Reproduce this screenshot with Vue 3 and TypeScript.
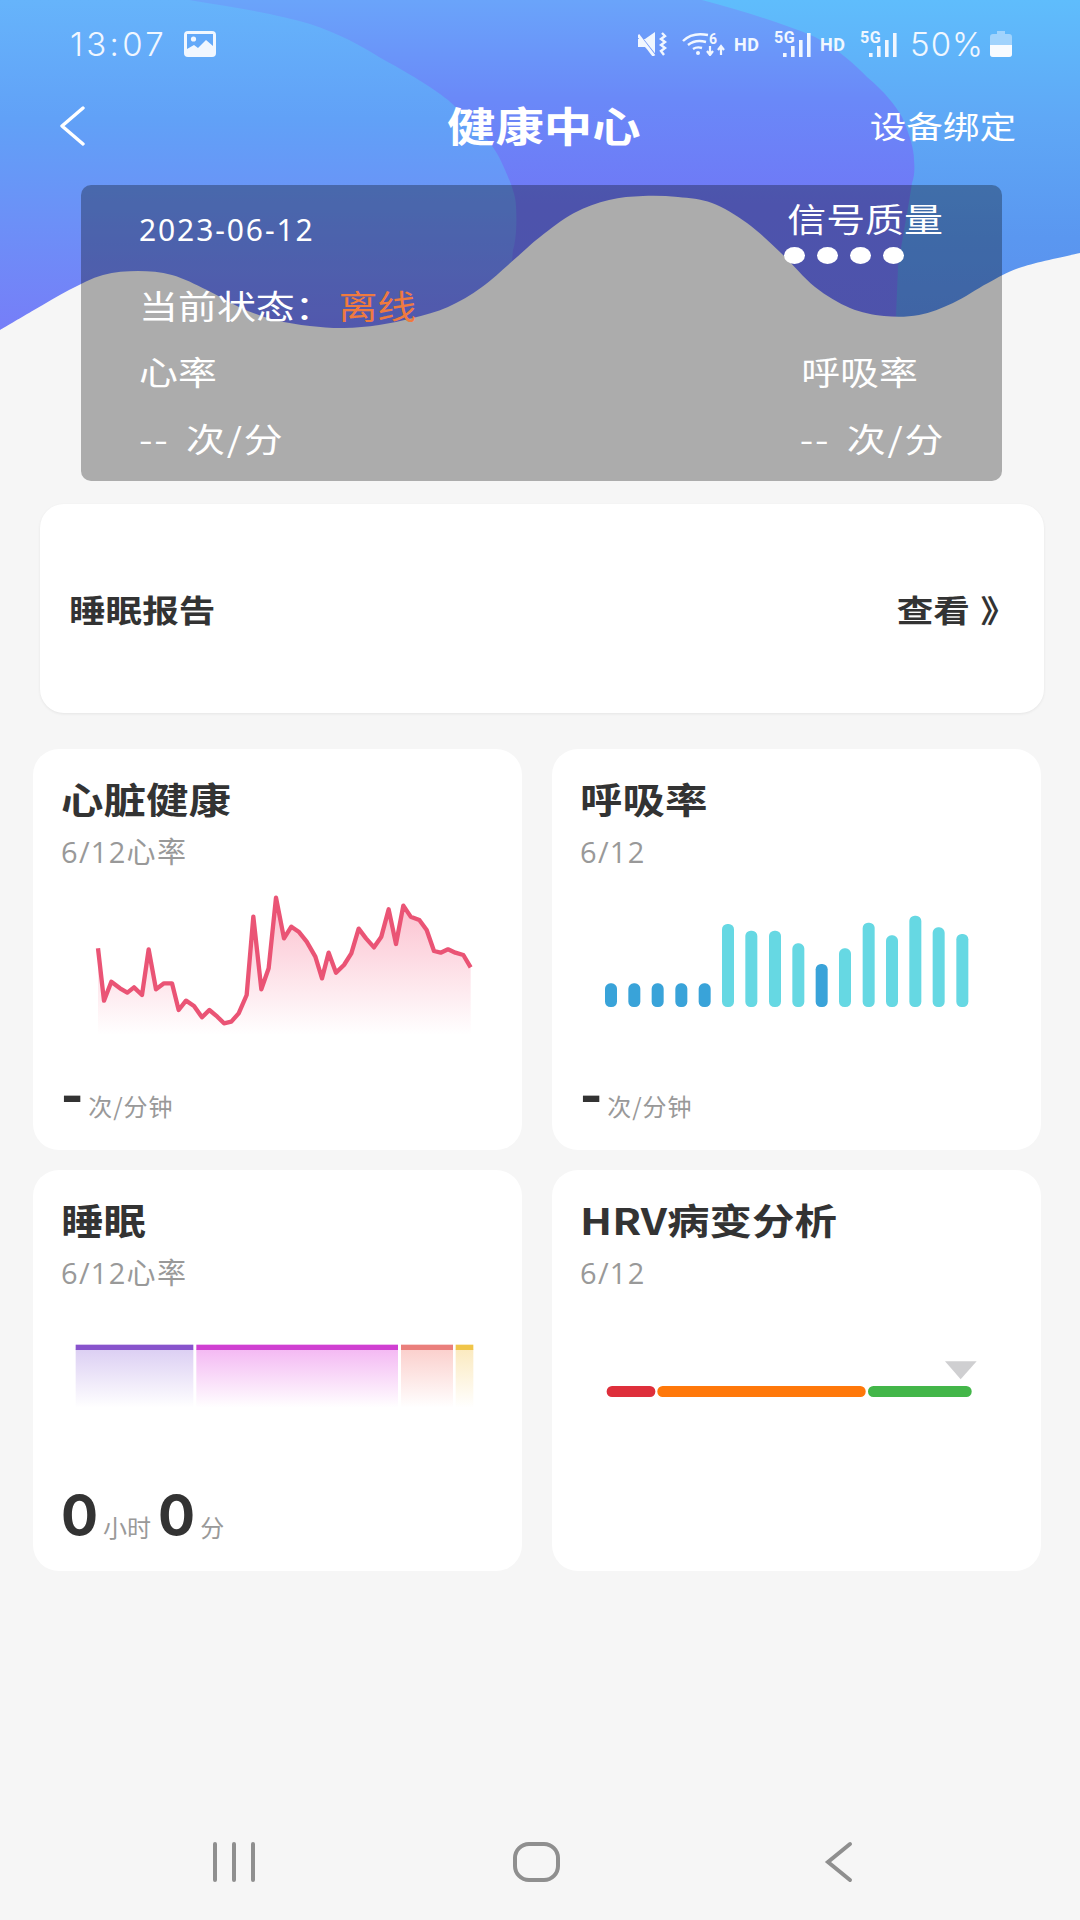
<template>
  <div class="page">
    <svg class="wave" viewBox="0 0 1080 340" width="1080" height="340">
      <defs>
        <linearGradient id="baseFill" x1="0" y1="0" x2="0" y2="1">
          <stop offset="0" stop-color="#6aa4fa" />
          <stop offset="0.3" stop-color="#6a88f8" />
          <stop offset="0.6" stop-color="#6f78f6" />
          <stop offset="1" stop-color="#7076f5" />
        </linearGradient>
        <linearGradient id="leftFill" x1="0" y1="0" x2="0" y2="1">
          <stop offset="0" stop-color="#66b4fb" />
          <stop offset="0.35" stop-color="#61a1f7" />
          <stop offset="0.65" stop-color="#6c90f7" />
          <stop offset="1" stop-color="#777cf8" />
        </linearGradient>
        <linearGradient id="rightFill" x1="0" y1="0" x2="0" y2="1">
          <stop offset="0" stop-color="#5fbdfc" />
          <stop offset="0.35" stop-color="#5fa8f6" />
          <stop offset="0.7" stop-color="#5a97f0" />
          <stop offset="1" stop-color="#5c8eec" />
        </linearGradient>
      </defs>
      <rect width="1080" height="340" fill="url(#baseFill)" />
      <path d="M0 0H189C240 8 280 15 310 24C340 34 360 45 379 57C410 74 430 86 448 100C475 125 490 140 499 157C510 180 516 195 516 207C517 225 516 240 513 250L505 340H0Z" fill="url(#leftFill)" />
      <path d="M702 0C745 12 780 22 815 37C840 50 855 65 867 77C885 92 895 105 902 117C910 135 914 150 914 160C915 170 914 178 912 183C908 210 902 240 898 267L895 340H1080V0Z" fill="url(#rightFill)" />
      <path :d="wavePath" fill="#f6f6f6" />
    </svg>

    <div class="status-bar">
      <div class="status-left">
        <span class="clock">13:07</span>
        <svg viewBox="0 0 32 26" width="32" height="26">
          <rect width="32" height="26" rx="4" fill="#f1f7ff" />
          <path d="M3 3H29V15L22 9 14 17 10 14 3 18Z" fill="#63a9f9" />
          <circle cx="9.5" cy="8" r="2.6" fill="#f1f7ff" />
        </svg>
      </div>
      <div class="status-right">
        <svg viewBox="0 0 30 24" width="30" height="24">
          <path d="M0 7H7L17 0V22L7 15H0Z" fill="#f1f7ff" />
          <path d="M-1 0L18 24" stroke="#6f96f8" stroke-width="2" />
          <path d="M0 3L16 24" stroke="#f1f7ff" stroke-width="3" />
          <path d="M24 1L27 4 23 7 27 10 23 13 27 16 23 19 26 23" stroke="#f1f7ff" stroke-width="2.4" fill="none" />
        </svg>
        <svg class="wifi" viewBox="0 0 44 24" width="44" height="24">
          <g fill="none" stroke="#f1f7ff" stroke-width="2.4">
            <path d="M1 9C7 3 16 1 26 3" />
            <path d="M6 13C11 9 17 8 24 10" />
            <path d="M11 17C14 15 17 15 20 16" />
          </g>
          <circle cx="16" cy="21" r="2" fill="#f1f7ff" />
          <text x="27" y="12" class="wifi-six">6</text>
          <path d="M28 14V22M25 19 28 23 31 19M39 23V15M36 18 39 14 42 18" stroke="#f1f7ff" stroke-width="2.2" fill="none" />
        </svg>
        <span class="hd first-hd">HD</span>
        <div class="signal">
          <span class="five-g">5G</span>
          <svg viewBox="0 0 28 24" width="28" height="24">
            <g fill="#f1f7ff">
              <rect x="0" y="20" width="3.6" height="4" />
              <rect x="8" y="13" width="3.6" height="11" />
              <rect x="16" y="7" width="3.6" height="17" />
              <rect x="24" y="0" width="3.6" height="24" />
            </g>
          </svg>
        </div>
        <span class="hd">HD</span>
        <div class="signal">
          <span class="five-g">5G</span>
          <svg viewBox="0 0 28 24" width="28" height="24">
            <g fill="#f1f7ff">
              <rect x="0" y="20" width="3.6" height="4" />
              <rect x="8" y="13" width="3.6" height="11" />
              <rect x="16" y="7" width="3.6" height="17" />
              <rect x="24" y="0" width="3.6" height="24" />
            </g>
          </svg>
        </div>
        <span class="percent">50%</span>
        <svg class="battery" viewBox="0 0 22 26" width="22" height="26">
          <path d="M7 0H15V3H19A3 3 0 0 1 22 6V23A3 3 0 0 1 19 26H3A3 3 0 0 1 0 23V6A3 3 0 0 1 3 3H7Z" fill="#f1f7ff" fill-opacity="0.45" />
          <path d="M0 14H22V23A3 3 0 0 1 19 26H3A3 3 0 0 1 0 23Z" fill="#f8fbff" />
        </svg>
      </div>
    </div>

    <div class="nav">
      <svg class="back" viewBox="0 0 26 40" width="26" height="40">
        <path d="M24 2L3 20L24 38" fill="none" stroke="#fff" stroke-width="3.4" stroke-linecap="round" stroke-linejoin="round" />
      </svg>
      <span class="nav-title wide">健康中心</span>
      <span class="nav-action wide-end">设备绑定</span>
    </div>

    <section class="monitor">
      <div class="monitor-top">
        <div>
          <div class="monitor-date">2023-06-12</div>
          <div class="monitor-state wide">当前状态：<span class="offline">离线</span></div>
        </div>
        <div class="quality">
          <div class="wide-end">信号质量</div>
          <div class="dots">
            <i v-for="n in 4" :key="n" />
          </div>
        </div>
      </div>
      <div class="monitor-row">
        <span class="wide">心率</span>
        <span class="wide-end resp-label">呼吸率</span>
      </div>
      <div class="monitor-row values">
        <span class="wide">-- 次/分</span>
        <span class="wide-end">-- 次/分</span>
      </div>
    </section>

    <section class="report">
      <span class="wide">睡眠报告</span>
      <span class="wide-end report-link">查看 》</span>
    </section>

    <div class="cards">
      <article class="card">
        <h3>心脏健康</h3>
        <p class="sub">6/12心率</p>
        <svg class="chart" viewBox="93 390 1293 570" width="431" height="190">
          <defs>
            <linearGradient id="heartFill" gradientUnits="userSpaceOnUse" x1="0" y1="450" x2="0" y2="855">
              <stop offset="0" stop-color="#f7678a" stop-opacity="0.42" />
              <stop offset="1" stop-color="#f7678a" stop-opacity="0" />
            </linearGradient>
          </defs>
          <polygon :points="heartArea" fill="url(#heartFill)" />
          <polyline :points="heartLine" fill="none" stroke="#ea5475" stroke-width="13" stroke-linejoin="round" />
        </svg>
        <div class="foot"><b class="dash">-</b><span class="unit">次/分钟</span></div>
      </article>

      <article class="card">
        <h3>呼吸率</h3>
        <p class="sub">6/12</p>
        <svg class="chart" viewBox="90 390 1293 570" width="431" height="190">
          <rect
            v-for="bar in breathBars"
            :key="bar.x"
            :x="bar.x - 18"
            :y="bar.top"
            width="36"
            :height="771 - bar.top"
            rx="16"
            :fill="bar.dark ? '#39a3d9' : '#66d8e3'"
          />
        </svg>
        <div class="foot"><b class="dash">-</b><span class="unit">次/分钟</span></div>
      </article>

      <article class="card">
        <h3>睡眠</h3>
        <p class="sub">6/12心率</p>
        <svg class="chart" viewBox="93 393 1293 570" width="431" height="190">
          <defs>
            <linearGradient v-for="seg in sleepSegs" :id="seg.id" :key="seg.id" x1="0" y1="0" x2="0" y2="1">
              <stop offset="0" :stop-color="seg.fade" />
              <stop offset="1" :stop-color="seg.fade" stop-opacity="0" />
            </linearGradient>
          </defs>
          <g v-for="seg in sleepSegs" :key="seg.id">
            <rect :x="seg.x" y="538" :width="seg.w" height="175" :fill="`url(#${seg.id})`" />
            <rect :x="seg.x" y="524" :width="seg.w" height="16" :fill="seg.color" />
          </g>
        </svg>
        <div class="foot sleep-foot">
          <b class="big">0</b><span class="unit">小时</span><b class="big">0</b><span class="unit">分</span>
        </div>
      </article>

      <article class="card">
        <h3>HRV病变分析</h3>
        <p class="sub">6/12</p>
        <svg class="chart" viewBox="90 393 1293 570" width="431" height="190">
          <rect x="170" y="648" width="146" height="33" rx="16" fill="#de2f3b" />
          <rect x="322" y="648" width="625" height="33" rx="16" fill="#ff780a" />
          <rect x="954" y="648" width="311" height="33" rx="16" fill="#43b649" />
          <polygon points="1185,574 1280,574 1232,628" fill="#cfcfd1" />
        </svg>
      </article>
    </div>

    <div class="sys-nav">
      <svg viewBox="0 0 44 42" width="44" height="42">
        <g stroke="#8f8f8f" stroke-width="4" stroke-linecap="round">
          <path d="M3 3V39M22 3V39M41 3V39" />
        </g>
      </svg>
      <svg class="home" viewBox="0 0 50 42" width="50" height="42">
        <rect x="4" y="3" width="43" height="36" rx="14" fill="none" stroke="#8f8f8f" stroke-width="4" />
      </svg>
      <svg class="back-key" viewBox="0 0 30 42" width="30" height="42">
        <path d="M27 3L5 21L27 39" fill="none" stroke="#8f8f8f" stroke-width="4" stroke-linecap="round" stroke-linejoin="miter" />
      </svg>
    </div>
  </div>
</template>

<script setup lang="ts">
const wavePoints: [number, number][] = [
  [0, 330], [34, 310], [69, 290], [103, 275], [138, 271], [172, 275], [207, 290], [241, 308],
  [275, 320], [310, 326], [344, 328], [379, 325], [413, 318], [448, 307], [482, 287], [517, 257],
  [540, 237], [574, 213], [609, 200], [643, 196], [678, 197], [712, 203], [747, 223], [781, 253],
  [815, 287], [850, 308], [884, 316], [919, 315], [953, 303], [988, 283], [1022, 267], [1080, 253],
]

// smooth line through the sampled edge of the white area
function smoothPath(pts: [number, number][]) {
  let d = `M${pts[0][0]} ${pts[0][1]}`
  for (let i = 0; i < pts.length - 1; i++) {
    const p0 = pts[Math.max(i - 1, 0)]
    const p1 = pts[i]
    const p2 = pts[i + 1]
    const p3 = pts[Math.min(i + 2, pts.length - 1)]
    const c1x = p1[0] + (p2[0] - p0[0]) / 6
    const c1y = p1[1] + (p2[1] - p0[1]) / 6
    const c2x = p2[0] - (p3[0] - p1[0]) / 6
    const c2y = p2[1] - (p3[1] - p1[1]) / 6
    d += `C${c1x} ${c1y} ${c2x} ${c2y} ${p2[0]} ${p2[1]}`
  }
  return d
}

const wavePath = `${smoothPath(wavePoints)}V340H0Z`

const heartPoints: [number, number][] = [
  [204, 595], [222, 752], [244, 695], [270, 715], [292, 728], [312, 712], [336, 735], [356, 598],
  [378, 718], [402, 700], [426, 700], [446, 780], [468, 752], [492, 768], [516, 802], [538, 780],
  [562, 800], [582, 820], [604, 815], [626, 790], [650, 735], [670, 500], [694, 718], [716, 655],
  [738, 443], [762, 565], [784, 530], [806, 545], [830, 575], [856, 620], [876, 685], [896, 608],
  [918, 668], [942, 645], [964, 610], [986, 536], [1008, 565], [1032, 592], [1054, 560], [1076, 478],
  [1098, 582], [1120, 467], [1142, 500], [1168, 510], [1190, 540], [1212, 603], [1232, 608],
  [1254, 598], [1276, 608], [1300, 615], [1322, 652],
]

const heartLine = heartPoints.map((p) => p.join(',')).join(' ')
const heartArea = `204,855 ${heartLine} 1322,855`

const breathBars = [
  { x: 183, top: 700, dark: true },
  { x: 253, top: 700, dark: true },
  { x: 323, top: 700, dark: true },
  { x: 394, top: 700, dark: true },
  { x: 464, top: 700, dark: true },
  { x: 534, top: 522 },
  { x: 604, top: 542 },
  { x: 675, top: 542 },
  { x: 745, top: 580 },
  { x: 815, top: 642, dark: true },
  { x: 885, top: 595 },
  { x: 956, top: 518 },
  { x: 1026, top: 556 },
  { x: 1096, top: 497 },
  { x: 1166, top: 532 },
  { x: 1237, top: 552 },
]

const sleepSegs = [
  { id: 'sleepDeep', x: 137, w: 353, color: '#8853cc', fade: '#dccff3' },
  { id: 'sleepLight', x: 499, w: 605, color: '#d03fd2', fade: '#f4b9f3' },
  { id: 'sleepRem', x: 1113, w: 156, color: '#ea7f7c', fade: '#fbd0cd' },
  { id: 'sleepAwake', x: 1277, w: 53, color: '#f0c549', fade: '#fbeac0' },
]
</script>

<style>
html,
body {
  margin: 0;
  background: #f6f6f6;
}
</style>

<style scoped>
.page {
  position: relative;
  width: 1080px;
  height: 1920px;
  display: flex;
  flex-direction: column;
  overflow: hidden;
  background: #f6f6f6;
  font-family: "Noto Sans CJK SC", "Liberation Sans", sans-serif;
  color: #333;
}

.wave {
  position: absolute;
  top: 0;
  left: 0;
}

.status-bar,
.nav,
.monitor,
.report,
.cards,
.sys-nav {
  position: relative;
}

/* the source capture is stretched sideways, so the text is too */
.wide,
.wide-end {
  display: inline-block;
  transform: scaleX(1.18);
  transform-origin: left center;
}

.wide-end {
  transform-origin: right center;
}

.status-bar {
  height: 88px;
  padding: 0 68px 0 70px;
  display: flex;
  justify-content: space-between;
  align-items: center;
  color: #f1f7ff;
  font-family: Inter, sans-serif;
}

.status-left {
  display: flex;
  align-items: center;
  gap: 17px;
}

.clock,
.percent {
  font-size: 33px;
  font-weight: 300;
}

.clock {
  letter-spacing: 3.3px;
}

.percent {
  letter-spacing: 1px;
}

.status-right {
  display: flex;
  align-items: center;
}

.wifi {
  margin-left: 14px;
}

.wifi-six {
  font: 700 14px Roboto, sans-serif;
  fill: #f1f7ff;
}

.hd {
  width: 26px;
  margin-left: 9px;
  font-size: 18px;
  font-weight: 700;
  letter-spacing: 0.5px;
  font-family: Roboto, sans-serif;
}

.first-hd {
  margin-left: 8px;
}

.signal {
  position: relative;
  margin-left: 14px;
  width: 37px;
  height: 24px;
}

.signal svg {
  position: absolute;
  left: 9px;
  top: 1px;
}

.five-g {
  position: absolute;
  left: 0;
  top: -2px;
  font-size: 16px;
  line-height: 1;
  font-weight: 700;
  letter-spacing: 0.5px;
  font-family: Roboto, sans-serif;
}

.percent {
  margin-left: 13px;
}

.battery {
  margin-left: 6px;
}

.nav {
  height: 80px;
  margin-top: -4px;
  padding: 0 64px 0 59px;
  display: grid;
  grid-template-columns: 1fr auto 1fr;
  align-items: center;
  color: #fff;
}

.back {
  justify-self: start;
  margin-top: 4px;
}

.nav-title {
  margin-left: -18px;
  font-size: 41px;
  font-weight: 700;
}

.nav-action {
  justify-self: end;
  font-size: 31px;
}

.monitor {
  width: 921px;
  height: 296px;
  box-sizing: border-box;
  margin: 21px 0 0 81px;
  padding: 30px 59px 0 58px;
  border-radius: 10px;
  background: rgba(0, 0, 0, 0.3);
  color: #fff;
  font-size: 33px;
  line-height: 33px;
}

.monitor-top {
  display: flex;
  justify-content: space-between;
}

.monitor-date {
  font-family: "Noto Sans", sans-serif;
  font-size: 30px;
  line-height: 30px;
  letter-spacing: 1.9px;
}

.monitor-state {
  margin-top: 44px;
}

.offline {
  margin-left: 4px;
  color: #ef7a3f;
}

.quality {
  margin-top: -13px;
  text-align: right;
}

.dots {
  display: flex;
  gap: 12px;
  margin-top: 12px;
  width: 159px;
}

.dots i {
  width: 21px;
  height: 17px;
  border-radius: 50%;
  background: #fff;
}

.monitor-row {
  display: flex;
  justify-content: space-between;
  margin-top: 33px;
}

.resp-label {
  margin-right: 25px;
}

.monitor-row.values {
  margin: 34px -2px 0 0;
  letter-spacing: 1.5px;
  word-spacing: 5px;
}

.report {
  width: 1004px;
  height: 209px;
  box-sizing: border-box;
  margin: 23px 0 0 40px;
  padding: 0 26px 0 29px;
  display: flex;
  justify-content: space-between;
  align-items: center;
  border-radius: 24px;
  background: #fff;
  box-shadow: 0 1px 3px rgba(0, 0, 0, 0.07);
  font-size: 31px;
  font-weight: 700;
}

.report-link {
  word-spacing: 2px;
  margin-right: 1px;
}

.cards {
  margin: 36px 0 0 33px;
  width: 1008px;
  display: grid;
  grid-template-columns: 489px 489px;
  grid-auto-rows: 401px;
  gap: 20px 30px;
}

.card {
  box-sizing: border-box;
  padding: 24px 28px 0;
  border-radius: 26px;
  background: #fff;
  display: flex;
  flex-direction: column;
}

.card h3 {
  margin: 0;
  font-size: 36px;
  line-height: 50px;
  font-weight: 700;
  transform: scaleX(1.18);
  transform-origin: left center;
}

.sub {
  margin: 11px 0 0;
  font-size: 29px;
  line-height: 36px;
  letter-spacing: 1.3px;
  color: #999;
  font-family: "Open Sans", "Noto Sans CJK SC", sans-serif;
}

.chart {
  display: block;
  margin: 10px 0 -6px;
  flex-shrink: 0;
}

.foot {
  display: flex;
  align-items: baseline;
  margin-top: -4px;
}

.dash {
  font-size: 60px;
  line-height: 60px;
}

.unit {
  margin: 0 5px 0 5px;
  font-size: 24px;
  letter-spacing: 1px;
  color: #999;
}

.big {
  font-size: 55px;
  line-height: 60px;
  font-family: Inter, sans-serif;
}

.sleep-foot {
  margin-top: 0;
}

.sleep-foot .unit {
  letter-spacing: 0;
  margin-right: 7px;
  transform: translateY(2px);
}

.sys-nav {
  margin-top: auto;
  height: 120px;
  box-sizing: border-box;
  padding: 41px 0 0 212px;
  display: flex;
  align-items: flex-start;
}

.home {
  margin-left: 255px;
}

.back-key {
  margin-left: 262px;
}
</style>
